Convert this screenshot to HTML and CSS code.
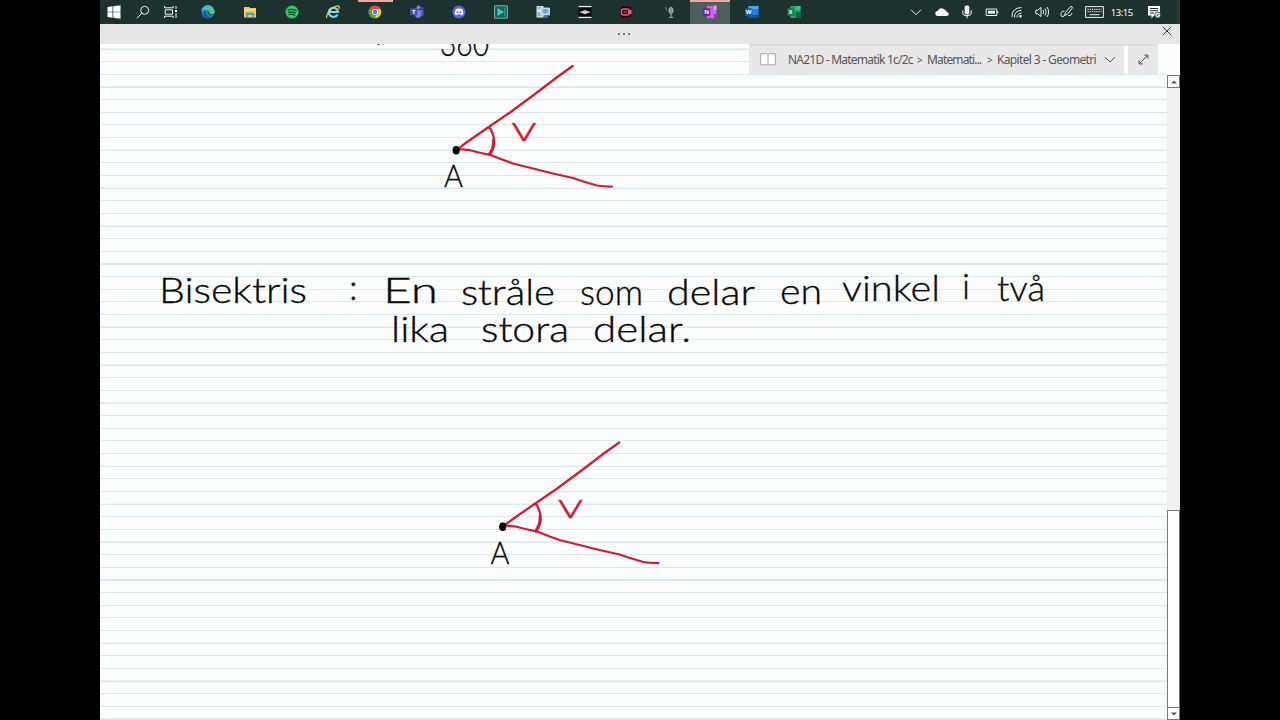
FILE: index.html
```
<!DOCTYPE html>
<html lang="sv">
  <head>
    <meta charset="UTF-8" />
    <meta name="viewport" content="width=device-width, initial-scale=1.0" />
    <title>Kapitel 3 - Geometri</title>
    <link rel="stylesheet" href="styles.css">
  </head>
  <body>
    <div class="screen">
      <div class="taskbar">
        <div class="system">
          <svg class="icon" viewBox="0 0 14 14"><path fill="#fff" d="M.5 2l5-.7v5.4h-5zM6.2 1.2L13.5.3v6.4H6.2zM.5 7.3h5v5.4l-5-.7zM6.2 7.3h7.3v6.4l-7.3-.9z"/></svg>
          <svg class="icon line" viewBox="0 0 14 14"><circle cx="8.7" cy="5.3" r="4"/><path d="M5.8 8.2L.8 13.2"/></svg>
          <svg class="icon line" viewBox="0 0 14 14"><path d="M.5 1v1.8h8.7V1M.5 13v-1.8h8.7V13M1.2 4.8h7.3v4.4H1.2zM12 1v3M12 8v5"/><path d="M11 5h2v2h-2z" fill="#fff" stroke="none"/></svg>
        </div>
        <div class="apps">
          <div class="app">
            <svg class="icon" viewBox="0 0 14 14"><circle cx="7" cy="7" r="6.500" fill="#1b86d6"/><path d="M.6 6C1.500-1.500 13-1.500 13.500 6.500c0 3-4.200 3.200-5.200 2C9.500 6 6 3 .6 6z" fill="#48d07c"/><path d="M.6 6C1-.5 9-1.200 11.500 2 7.500 1.500 4 3 .6 6z" fill="#35bce5"/><path d="M5.500 6c-1.500 4 2 7 6 5.600-3 3-8 2-9-2C2 7.500 4 6 5.500 6z" fill="#1252a0"/><path d="M6.700 7.500C7 6 9 6.500 8.200 8c1 1.600 3.600 1.300 4.800.5-1 1.700-6 2.400-6.300-1z" fill="#1c322e"/></svg>
          </div>
          <div class="app">
            <svg class="icon" viewBox="0 0 14 14"><path d="M1 2h5l1 1h6v9.500H1z" fill="#f5c94c"/><path d="M1 4.200h12v1H1z" fill="#fde598"/><path d="M3 7.500h8v5H9.200V10H4.800v2.500H3z" fill="#4c9bd4"/></svg>
          </div>
          <div class="app">
            <svg class="icon" viewBox="0 0 14 14"><circle cx="7" cy="7" r="6.500" fill="#2fcf64"/><path d="M3 4.800c3-.8 5.800-.5 8.200.8M3.500 7.200c2.600-.7 4.800-.3 6.900.8M3.900 9.400c2-.5 3.900-.2 5.600.7" fill="none" stroke="#16382a" stroke-width="1.200" stroke-linecap="round"/></svg>
          </div>
          <div class="app">
            <svg class="icon" viewBox="0 0 14 14"><path d="M11.500 9.500a4.600 4.600 0 1 1 .5-2.500H4" fill="none" stroke="#79d4f8" stroke-width="2.200"/><path d="M1 13C-1 10 6 1 12 .8c1.800.2 1.400 2 .6 3" fill="none" stroke="#f3cf55" stroke-width="1.200"/></svg>
          </div>
          <div class="app running">
            <svg class="icon" viewBox="0 0 14 14"><circle cx="7" cy="7" r="6.300" fill="#f6c62f"/><path d="M1.500 3.800A6.300 6.300 0 0 1 12.500 4H7L4.500 8.500z" fill="#e6483d"/><path d="M1.500 3.800A6.300 6.300 0 0 0 6.500 13.300L9.500 8.500 4.500 8.500z" fill="#3fa757"/><circle cx="7" cy="7" r="3" fill="#fff"/><circle cx="7" cy="7" r="2.300" fill="#4385ee"/></svg>
          </div>
          <div class="app">
            <svg class="icon" viewBox="0 0 14 14"><circle cx="8.500" cy="2.500" r="2" fill="#7b83eb"/><circle cx="12" cy="3.400" r="1.300" fill="#5059c9"/><path d="M5 5h6v5c0 4-6 4-6 0z" fill="#7b83eb"/><path d="M11 5h2.600v4c0 2-1.200 2.600-2.600 2.300z" fill="#5059c9"/><rect x=".3" y="3.300" width="7" height="7" rx=".6" fill="#4650b8"/><text x="2" y="9" class="badge">T</text></svg>
          </div>
          <div class="app">
            <svg class="icon" viewBox="0 0 14 14"><circle cx="7" cy="7" r="6.500" fill="#5965e0"/><path d="M3.800 4.200Q7 3 10.200 4.200q1.300 2.500 1.100 5-1.200 1-2.300 1l-.6-1H5.600l-.6 1q-1.100 0-2.300-1-.2-2.500 1.100-5z" fill="#fff"/><circle cx="5.500" cy="7.200" r="1" fill="#5965e0"/><circle cx="8.500" cy="7.200" r="1" fill="#5965e0"/></svg>
          </div>
          <div class="app">
            <svg class="icon" viewBox="0 0 14 14"><path d="M.6.800h12.800v12.400H.6z" fill="#155f5a" stroke="#7cb5aa"/><path d="M3.500 3v8l6.500-4z" fill="#39d2b5"/><path d="M11 2.500v9" stroke="#39b5a0"/></svg>
          </div>
          <div class="app">
            <svg class="icon" viewBox="0 0 14 14"><path d="M.5 1h7v11.500h-7z" fill="#d6dddd"/><path d="M1.500 3h4M1.500 8h3M1.500 10h4" stroke="#71858b"/><path d="M5 3h8.500v7H5z" fill="#9bd5f4" stroke="#e4f4fb" stroke-width=".7"/><path d="M6.500 5h5.500M6.500 7h5.500M9.200 4v5" stroke="#4683a4" stroke-width=".7"/><path d="M7 12h5" stroke="#72b2d5"/></svg>
          </div>
          <div class="app">
            <svg class="icon" viewBox="0 0 14 14"><path d="M.5 0h13v14H.5z" fill="#070707"/><path d="M.5 1.500h13M.5 12.500h13" stroke="#e5e5e5" stroke-width="1.600"/><path d="M1 7l3.500-1L7 5 9.500 6l3.500 1-3.500 1.200L7 9.200 4.500 8.200z" fill="#c9cdcb"/></svg>
          </div>
          <div class="app">
            <svg class="icon" viewBox="0 0 14 14"><rect x="1" y="1" width="12" height="12" rx="2" fill="#160609" stroke="#6b2030" stroke-width=".7"/><rect x="2.500" y="4" width="7.500" height="6" rx="2" fill="none" stroke="#fa5f7d" stroke-width="1.400"/><path d="M10 6l2-1v4l-2-1zM4.500 7h3.500" stroke="#fa5f7d" fill="#fa5f7d"/></svg>
          </div>
          <div class="app">
            <svg class="icon" viewBox="0 0 14 14"><rect x="8" y="2.500" width="4" height="6" rx="2" fill="#7d928d" stroke="#c5d0cd" stroke-width=".7"/><path d="M10 9v3.300M7.800 12.300h4.400M4 3h1.500M5 5h1" stroke="#a9bab5"/></svg>
          </div>
          <div class="app current">
            <svg class="icon" viewBox="0 0 14 14"><path d="M4 .7h9.500v12.600H4z" fill="#ca64ea"/><path d="M11 .7h2.500v4.200H11z" fill="#e9a2f8"/><path d="M11 9h2.500v4.300H11z" fill="#9332bf"/><rect x=".2" y="3.300" width="7" height="7.400" fill="#7719aa"/><text x="1.200" y="9.200" class="badge">N</text></svg>
          </div>
          <div class="app">
            <svg class="icon" viewBox="0 0 14 14"><path d="M3.500 1h10v12h-10z" fill="#2b7cd3"/><path d="M3.500 1h10v3h-10z" fill="#48a9ee"/><path d="M3.500 10h10v3h-10z" fill="#174da0"/><rect x=".2" y="3.300" width="7" height="7.400" fill="#185abd"/><text x=".8" y="9.200" class="badge">W</text></svg>
          </div>
          <div class="app">
            <svg class="icon" viewBox="0 0 14 14"><path d="M3.500 1h10v12h-10z" fill="#21a366"/><path d="M8.500 1h5v4h-5z" fill="#35c481"/><path d="M8.500 7h5v6h-5z" fill="#14683d"/><rect x=".2" y="3.300" width="7" height="7.400" fill="#107c41"/><text x="1.400" y="9.200" class="badge">X</text></svg>
          </div>
        </div>
        <div class="tray">
          <svg class="icon line" viewBox="0 0 14 14"><path d="M2 4.700l5 5 5-5"/></svg>
          <svg class="icon" viewBox="0 0 14 14"><path d="M3 11a2.500 2.500 0 0 1-.3-5 4 4 0 0 1 7-1.300 3 3 0 0 1 2 2.300 2 2 0 0 1 0 4z" fill="#f2f5f4"/></svg>
          <svg class="icon" viewBox="0 0 14 14"><rect x="4.700" y=".5" width="4.600" height="9" rx="1.500" fill="#fff"/><path d="M2.800 5.500V8q0 2.700 4.200 2.700T11.200 8V5.500M7 10.500v3" stroke="#fff" fill="none"/></svg>
          <svg class="icon line" viewBox="0 0 14 14"><path d="M1.200 4h10.600v6.500H1.200zM12.800 6v2.500"/><path d="M3 5.700h7v3H3z" fill="#e7eeeb" stroke="none"/></svg>
          <svg class="icon line" viewBox="0 0 14 14"><path d="M2 12Q1.500 3 11.500 2.500M4.500 12.500Q4 6 11.500 5.300M7 12.500Q7 8.500 11.500 8"/><circle cx="10.500" cy="11.300" r="1" fill="#fff"/></svg>
          <svg class="icon line" viewBox="0 0 14 14"><path d="M.8 5.200h2L6 2.500v9L2.800 8.800h-2zM8 5q1.200 2 0 4M10 3.500q2.500 3.500 0 7M12 2q3.300 5 0 10"/></svg>
          <svg class="icon line" viewBox="0 0 14 14"><path d="M4.500 10.500l1-3 5-6q2-.5 1.800 1.500l-5 6.300zM4.500 10.500Q1 13.500 1 9.500t3.500-3.300M8 10.500q3 1.500 4-2.500"/></svg>
          <svg class="keyboard line" viewBox="0 0 19 12"><path d="M.6.600h17.800v10.800H.6z"/><path d="M2.500 3.300h14M2.500 5.700h14" stroke-dasharray="1.400 .8"/><path d="M4.500 8.700h10"/></svg>
          <span class="clock">13:15</span>
          <svg class="icon" viewBox="0 0 14 14"><path d="M1 1h12v9.500H7l-2.500 3v-3H1z" fill="#fff"/><path d="M3 3.500h8M3 5.700h8M3 8h4" stroke="#1c322e"/><circle cx="10.700" cy="10" r="3" fill="#dce4e1" stroke="#1c322e" stroke-width=".7"/><path d="M9.500 11l2.300-2" stroke="#1c322e"/></svg>
        </div>
      </div>

      <div class="titlebar">
        <span class="dots"><i></i><i></i><i></i></span>
        <svg class="close" viewBox="0 0 10 10"><path d="M.8.800l8.400 8.400M9.200.800L.8 9.200"/></svg>
      </div>

      <div class="notebook">
        <div class="page">
          <svg class="ink" viewBox="100 44 1067 676">
            <defs>
              <g id="angle">
                <path d="M458 149Q464 144 470 140L488 127.500 510 112.500 535 94 558 76.500 572.700 66"/>
                <path d="M458 149L470 150.200Q480 153 490 154.800 500 159 513 163.500L553 173.500 573 178Q584 182 597 185.500 605 186.800 612 186.500"/>
                <path d="M487 128q3-1 4 2 7 13-1.500 25"/>
                <path d="M493.500 140q1 7-4 14" class="thick"/>
                <ellipse cx="456.200" cy="150.300" rx="3.600" ry="4.300" class="point"/>
              </g>
            </defs>

            <circle cx="378.500" cy="44" r="1" class="point"/>
            <text x="440" y="56" textLength="49" lengthAdjust="spacingAndGlyphs">360</text>
            <use href="#angle"/>
            <text x="511" y="141" textLength="26" lengthAdjust="spacingAndGlyphs" class="red">v</text>
            <text x="444" y="187" textLength="19" lengthAdjust="spacingAndGlyphs" class="label">A</text>

            <text x="159" y="303" textLength="148" lengthAdjust="spacingAndGlyphs">Bisektris</text>
            <text x="349" y="300">:</text>
            <text x="383" y="303" textLength="55" lengthAdjust="spacingAndGlyphs">En</text>
            <text x="461" y="305" textLength="94" lengthAdjust="spacingAndGlyphs">stråle</text>
            <text x="580" y="305" textLength="63" lengthAdjust="spacingAndGlyphs">som</text>
            <text x="667" y="305" textLength="88" lengthAdjust="spacingAndGlyphs">delar</text>
            <text x="780" y="304" textLength="42" lengthAdjust="spacingAndGlyphs">en</text>
            <text x="842" y="301" textLength="98" lengthAdjust="spacingAndGlyphs">vinkel</text>
            <text x="962" y="299">i</text>
            <text x="997" y="301" textLength="48" lengthAdjust="spacingAndGlyphs">två</text>

            <text x="391" y="342" textLength="58" lengthAdjust="spacingAndGlyphs">lika</text>
            <text x="481" y="342" textLength="88" lengthAdjust="spacingAndGlyphs">stora</text>
            <text x="593" y="342" textLength="98" lengthAdjust="spacingAndGlyphs">delar.</text>

            <use href="#angle" x="46.500" y="376.500"/>
            <text x="557.500" y="517.500" textLength="26" lengthAdjust="spacingAndGlyphs" class="red">v</text>
            <text x="490.500" y="563.500" textLength="19" lengthAdjust="spacingAndGlyphs" class="label">A</text>
          </svg>
        </div>
        <div class="scrollbar">
          <div class="scroll-button"><svg viewBox="0 0 6 4"><path d="M0 3.500h6L3 .5z"/></svg></div>
          <div class="track"></div>
          <div class="thumb"></div>
          <div class="scroll-button"><svg viewBox="0 0 6 4"><path d="M0 .5h6L3 3.500z"/></svg></div>
        </div>
        <div class="location">
          <div class="crumbs">
            <svg class="book" viewBox="0 0 17 14"><path d="M.6.700h7.200l.7.600.7-.6h7.200v12H9.200l-.7.500-.7-.5H.6zM8.500 1.300v12"/></svg>
            <span class="crumb first">NA21D - Matematik 1c/2c</span>
            <span class="sep">&gt;</span>
            <span class="crumb second">Matemati...</span>
            <span class="sep">&gt;</span>
            <span class="crumb third">Kapitel 3 - Geometri</span>
            <svg class="chevron" viewBox="0 0 12 8"><path d="M1 1l5 5 5-5"/></svg>
          </div>
          <div class="expand">
            <svg viewBox="0 0 12 12"><path d="M1.500 10.500l9-9M6.800 1.200h4v4M1.200 6.800v4h4"/></svg>
          </div>
        </div>
      </div>
    </div>
  </body>
</html>
```
FILE: styles.css
```
* {
  box-sizing: border-box;
}

body {
  margin: 0;
  background-color: #000;
  font-family: "Noto Sans", "Open Sans", sans-serif;
  overflow: hidden;
}

svg {
  display: block;
  flex: none;
}

.screen {
  display: flex;
  flex-direction: column;
  width: 1080px;
  height: 720px;
  margin: 0 auto;
}

/* taskbar */
.taskbar {
  display: flex;
  height: 24px;
  background-color: #1c322e;
  border-right: 3px solid #263c38;
}

.icon {
  width: 14px;
  height: 14px;
}

.line {
  fill: none;
  stroke: #edf2f0;
  stroke-width: 1;
}

.badge {
  font-family: "Open Sans", sans-serif;
  font-size: 6px;
  font-weight: 700;
  fill: #fff;
}

.system {
  display: flex;
  align-items: center;
  gap: 14.500px;
  width: 87px;
  padding-left: 7px;
}

.apps {
  display: flex;
}

.app {
  display: flex;
  align-items: center;
  justify-content: center;
  width: 41.850px;
}

.running {
  background: linear-gradient(#eea7a5, #eea7a5) center top / 35px 2px no-repeat;
}

.current {
  background: linear-gradient(#eea7a5 2px, #4b605b 2px) center / 40px 24px no-repeat;
}

.tray {
  display: flex;
  align-items: center;
  gap: 11.200px;
  margin-left: auto;
  padding-right: 16px;
}

.keyboard {
  width: 19px;
  height: 12px;
  margin: 0 -1px;
}

.clock {
  width: 25px;
  margin: 0 0 0 -3px;
  color: #fff;
  font-size: 9.500px;
  letter-spacing: -0.500px;
  white-space: nowrap;
}

/* window title */
.titlebar {
  display: flex;
  align-items: center;
  height: 20px;
  padding: 0 8px 0 518px;
  background-color: #e6e6e6;
}

.dots {
  display: flex;
  gap: 3px;
}

.dots i {
  width: 2px;
  height: 2px;
  background-color: #737373;
}

.close {
  width: 10px;
  height: 10px;
  margin: -6px 0 0 auto;
  fill: none;
  stroke: #333;
}

/* lined paper */
.notebook {
  position: relative;
  display: flex;
  height: 676px;
  background-color: #fcfefe;
}

.page {
  width: 1067px;
  background: repeating-linear-gradient(#fcfefe 0, #fcfefe 11.300px, #d8e9ee 11.700px, #d8e9ee 12.640px) 0 -7px / 100% 700px;
}

.ink {
  width: 1067px;
  height: 676px;
}

.ink text {
  font-family: Lato, sans-serif;
  font-size: 36px;
  font-weight: 300;
  fill: #080808;
  stroke: #080808;
  stroke-width: 0.350;
}

.ink text.label {
  font-size: 32px;
}

.ink text.red {
  font-size: 35px;
  fill: #dc1630;
  stroke: #dc1630;
}

.ink path {
  fill: none;
  stroke: #d81730;
  stroke-width: 2.200;
  stroke-linecap: round;
  stroke-linejoin: round;
}

.ink .thick {
  stroke-width: 3;
}

.ink .point {
  fill: #050505;
}

/* breadcrumb lies over the page */
.location {
  position: absolute;
  top: 0;
  right: 0;
  display: flex;
  gap: 4px;
  width: 431px;
  height: 30px;
  background: linear-gradient(#dedede, #dedede) 0 0 / 409px 2px no-repeat, #fdfefe;
}

.crumbs {
  display: flex;
  align-items: center;
  width: 375px;
  padding-left: 11px;
  background-color: #e8e8e8;
  border-top: 2px solid #dcdcdc;
  color: #555;
  font-size: 12px;
  white-space: nowrap;
}

.book {
  width: 16px;
  height: 13px;
  margin: -2px 12px 0 0;
  fill: #fff;
  stroke: #8c8c8c;
  stroke-width: 0.800;
}

.crumb,
.sep {
  line-height: 16px;
  margin-top: -1px;
}

.first {
  width: 129px;
  letter-spacing: -0.780px;
}

.second {
  width: 60px;
  letter-spacing: -0.850px;
}

.third {
  width: 107px;
  letter-spacing: -0.650px;
}

.sep {
  width: 10px;
  font-size: 10px;
}

.chevron {
  width: 12px;
  height: 8px;
  fill: none;
  stroke: #555;
}

.expand {
  display: flex;
  align-items: center;
  justify-content: center;
  width: 30px;
  padding-bottom: 2px;
  background-color: #e8e8e8;
  border-top: 2px solid #dcdcdc;
}

.expand svg {
  width: 11px;
  height: 11px;
  fill: none;
  stroke: #444;
}

/* scrollbar */
.scrollbar {
  display: flex;
  flex-direction: column;
  width: 13px;
  padding-top: 31px;
}

.scroll-button {
  display: flex;
  align-items: center;
  justify-content: center;
  height: 13px;
  background-color: #fff;
  border: 1px solid #777;
}

.scroll-button svg {
  width: 6px;
  height: 4px;
  fill: #555;
}

.track {
  height: 422px;
  background-color: #f0f0f0;
}

.thumb {
  height: 197px;
  background-color: #fff;
  border: 1px solid #777;
  border-bottom: 0;
}
```
